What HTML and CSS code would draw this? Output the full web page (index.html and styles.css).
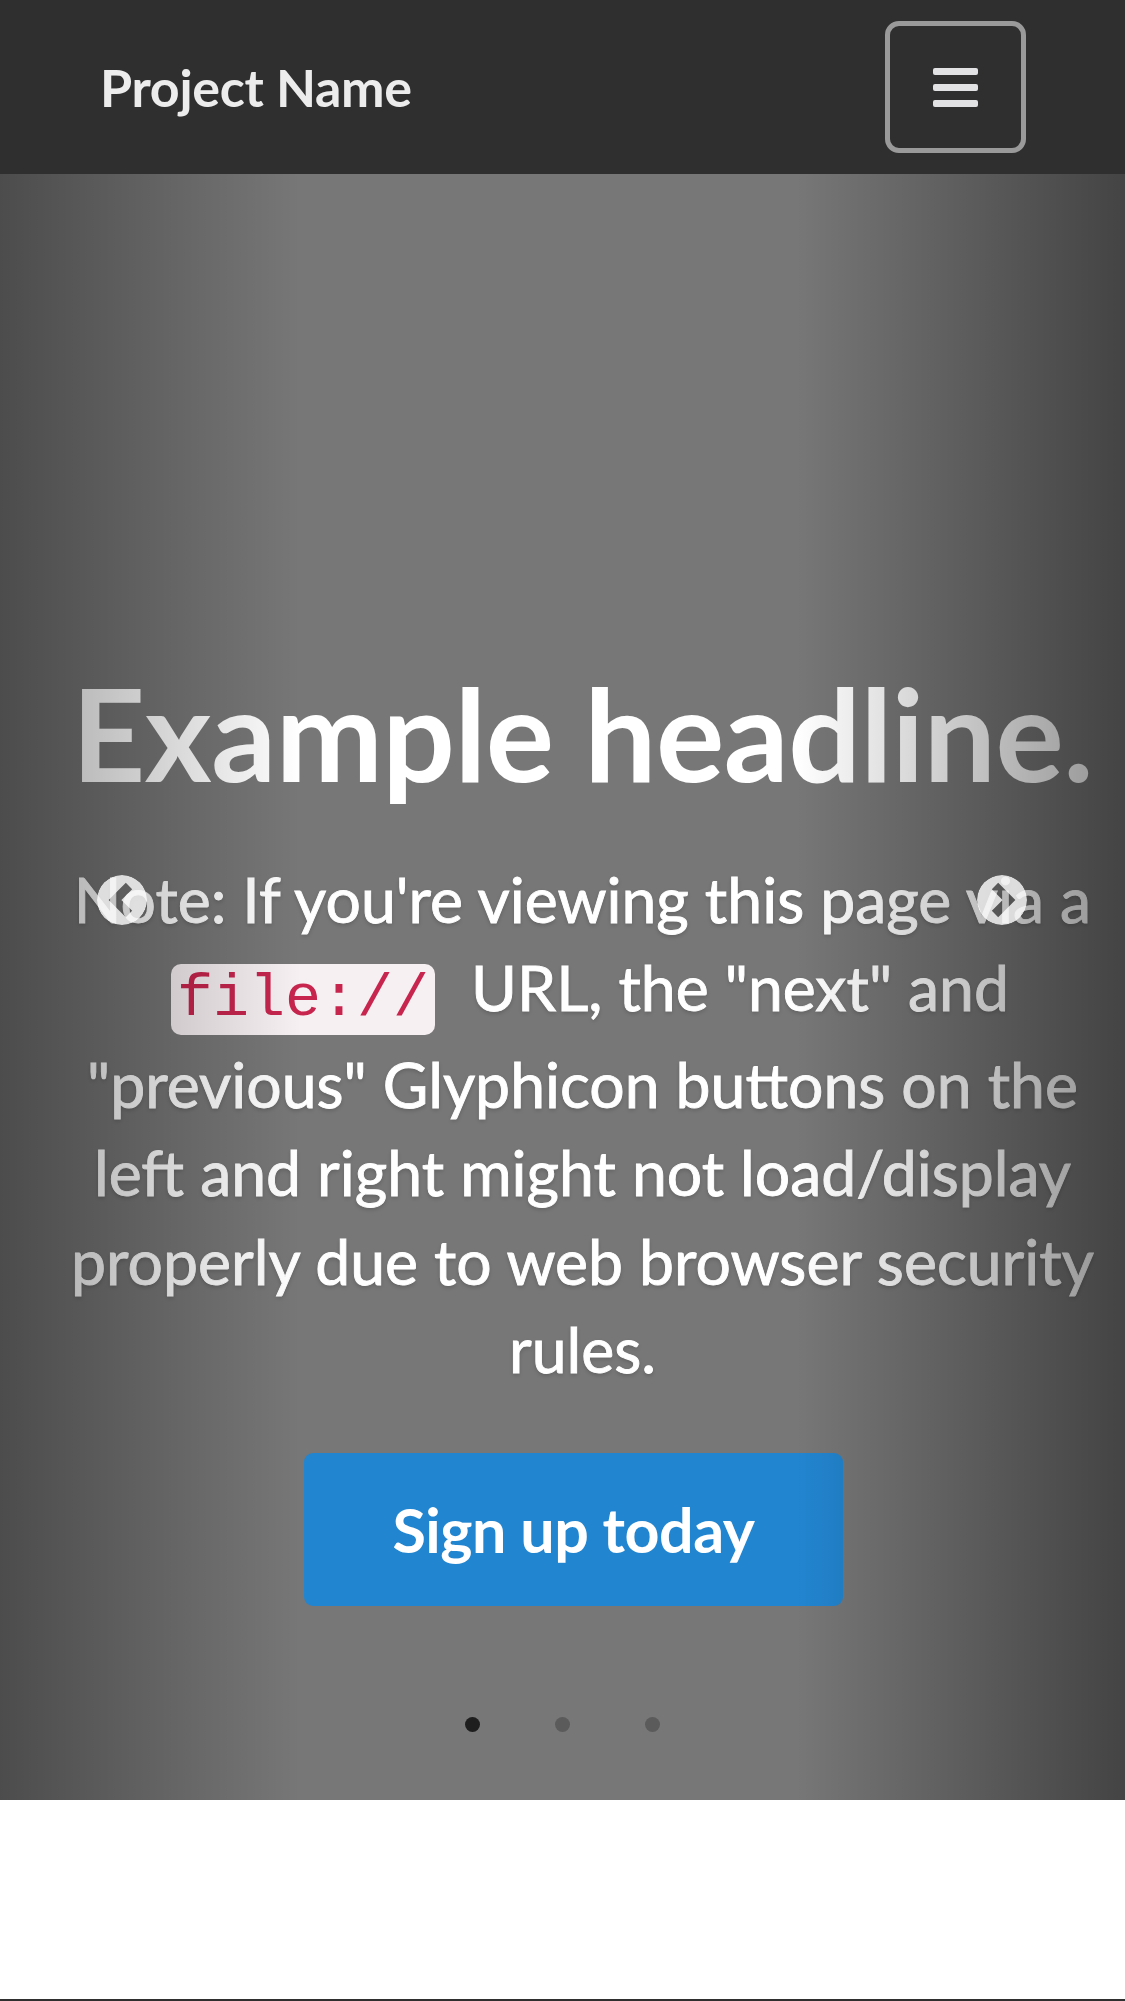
FILE: index.html
```html
<!DOCTYPE html>
<html lang="en">
<head>
<meta charset="utf-8">
<title>Project Name</title>
<link rel="stylesheet" href="styles.css">
</head>
<body>
<header class="navbar">
  <a class="brand" href="#">Project Name</a>
  <button class="toggle" type="button" aria-label="Toggle navigation">
    <span class="bar"></span><span class="bar"></span><span class="bar"></span>
  </button>
</header>
<section class="carousel">
  <div class="caption">
    <h1 class="headline">Example headline.</h1>
    <p class="note">Note: If you're viewing this page via a<br><code class="code">file://</code> URL, the "next" and<br>"previous" Glyphicon buttons on the<br>left and right might not load/display<br>properly due to web browser security<br>rules.</p>
    <a class="cta" href="#">Sign up today</a>
  </div>
  <ol class="indicators">
    <li class="dot active"></li>
    <li class="dot"></li>
    <li class="dot"></li>
  </ol>
  <a class="control control-left" href="#" aria-label="Previous">
    <svg class="chev" width="50" height="50" viewBox="-25 -25 50 50">
      <defs>
        <mask id="mask-left">
          <circle cx="0" cy="0" r="25" fill="#fff"/>
          <polyline points="7,-14 -7,0 7,14" fill="none" stroke="#000" stroke-width="9" stroke-linejoin="miter"/>
        </mask>
      </defs>
      <circle cx="0" cy="0" r="25" fill="#fff" mask="url(#mask-left)"/>
    </svg>
  </a>
  <a class="control control-right" href="#" aria-label="Next">
    <svg class="chev" width="50" height="50" viewBox="-25 -25 50 50">
      <defs>
        <mask id="mask-right">
          <circle cx="0" cy="0" r="25" fill="#fff"/>
          <polyline points="-7,-14 7,0 -7,14" fill="none" stroke="#000" stroke-width="9" stroke-linejoin="miter"/>
        </mask>
      </defs>
      <circle cx="0" cy="0" r="25" fill="#fff" mask="url(#mask-right)"/>
    </svg>
  </a>
</section>
<section class="after"></section>
<div class="next-rule"></div>
</body>
</html>
```

FILE: styles.css
```css
html, body {
  margin: 0;
  padding: 0;
}
body {
  font-family: Lato, "Open Sans", "Liberation Sans", sans-serif;
  background: #fff;
  color: #333;
  height: 2001px;
  overflow: hidden;
}

.navbar {
  height: 174px;
  box-sizing: border-box;
  background: #2f2f2f;
  display: flex;
  align-items: center;
  justify-content: space-between;
  padding: 0 99px 0 100px;
}
.brand {
  font-size: 52px;
  font-weight: 700;
  color: #ececec;
  text-decoration: none;
  line-height: 1.2;
  letter-spacing: -0.3px;
}
.toggle {
  width: 141px;
  height: 132px;
  box-sizing: border-box;
  border: 5px solid #9a9a9a;
  border-radius: 14px;
  background: transparent;
  display: flex;
  flex-direction: column;
  align-items: center;
  justify-content: center;
  gap: 9px;
  padding: 0;
}
.bar {
  display: block;
  width: 45px;
  height: 7px;
  border-radius: 2px;
  background: #e2e2e4;
}

.carousel {
  position: relative;
  height: 1626px;
  background: #777;
  overflow: hidden;
}
.caption {
  padding: 489px 0 0 40px;
  text-align: center;
  color: #fff;
  display: flex;
  flex-direction: column;
  align-items: center;
}
.headline {
  margin: 0;
  font-size: 128px;
  font-weight: 700;
  line-height: 1.1;
  color: #fff;
  white-space: nowrap;
  letter-spacing: -0.5px;
}
.note {
  margin: 51px 0 0;
  font-size: 62.5px;
  line-height: 88.5px;
  font-weight: 400;
  color: #fff;
  white-space: nowrap;
  -webkit-text-stroke: 0.9px #fff;
  text-shadow: 0 2px 4px rgba(0, 0, 0, 0.2);
}
.code {
  font-family: "Liberation Mono", "DejaVu Sans Mono", monospace;
  font-size: 60px;
  line-height: 80.5px;
  vertical-align: -4px;
  color: #c7254e;
  background: #f7f0f3;
  border-radius: 10px;
  padding: 1px 6px 2px;
  margin: 0 20px 0 15px;
  text-shadow: none;
  -webkit-text-stroke: 0;
}
.cta {
  margin: 59px 18px 0 0;
  display: block;
  width: 539px;
  box-sizing: border-box;
  padding: 36px 0;
  font-size: 61px;
  line-height: 81px;
  font-weight: 700;
  color: #fff;
  background: #2285d0;
  border-radius: 9px;
  text-decoration: none;
  letter-spacing: -0.5px;
}

.indicators {
  list-style: none;
  margin: 111px 0 0;
  padding: 0;
  display: flex;
  justify-content: center;
  gap: 75px;
}
.dot {
  width: 15px;
  height: 15px;
  border-radius: 50%;
  background: #5b5b5b;
}
.dot.active {
  background: #1e1e1e;
}

.control {
  position: absolute;
  top: 0;
  bottom: 0;
  z-index: 5;
}
.control-left {
  left: 0;
  width: 301px;
  background: linear-gradient(to right, rgba(0, 0, 0, 0.36), rgba(0, 0, 0, 0));
}
.control-right {
  right: 0;
  width: 329px;
  background: linear-gradient(to right, rgba(0, 0, 0, 0), rgba(0, 0, 0, 0.43));
}
.chev {
  position: absolute;
  top: 701px;
  opacity: 0.8;
}
.control-left .chev {
  left: 97px;
}
.control-right .chev {
  right: 98px;
}

.after {
  height: 199px;
  background: #fff;
}
.next-rule {
  height: 2px;
  background: #2f2f2f;
}
```
